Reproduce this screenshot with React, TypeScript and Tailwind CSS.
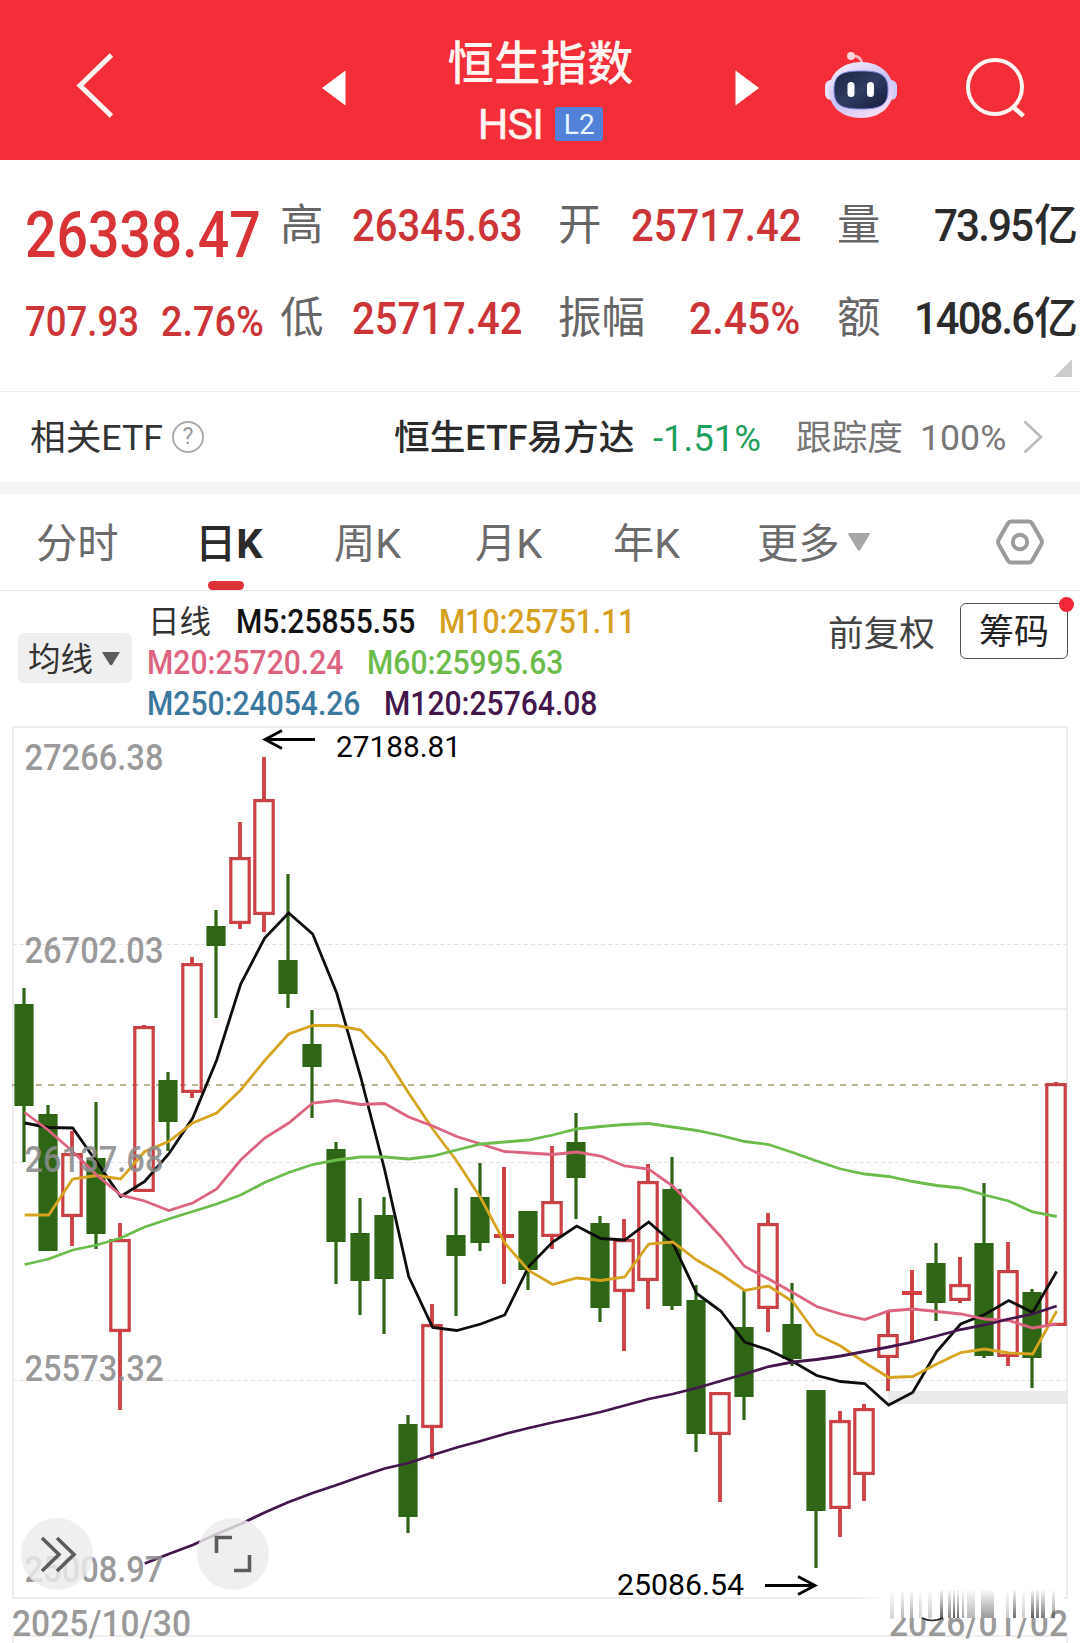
import type { ReactNode } from 'react';
import clsx from 'clsx';

// [direction, high, bodyTop, bodyBottom, low] in chart pixels
type Candle = ['up' | 'down', number, number, number, number];

const candles: Candle[] = [
  ['down', 988, 1004, 1106, 1162],
  ['down', 1105, 1114, 1251, 1251],
  ['up', 1131, 1153, 1217, 1246],
  ['down', 1102, 1158, 1234, 1249],
  ['up', 1223, 1239, 1332, 1410],
  ['up', 1025, 1026, 1192, 1192],
  ['down', 1072, 1080, 1122, 1151],
  ['up', 957, 963, 1093, 1098],
  ['down', 910, 926, 946, 1018],
  ['up', 822, 857, 924, 929],
  ['up', 757, 799, 915, 932],
  ['down', 874, 960, 994, 1008],
  ['down', 1010, 1044, 1067, 1118],
  ['down', 1142, 1149, 1242, 1284],
  ['down', 1198, 1233, 1281, 1315],
  ['down', 1197, 1215, 1279, 1334],
  ['down', 1415, 1424, 1517, 1533],
  ['up', 1304, 1324, 1428, 1459],
  ['down', 1188, 1235, 1256, 1316],
  ['down', 1163, 1197, 1243, 1251],
  ['up', 1167, 1234, 1238, 1284],
  ['down', 1211, 1211, 1270, 1290],
  ['up', 1146, 1201, 1237, 1249],
  ['down', 1113, 1142, 1178, 1219],
  ['down', 1216, 1223, 1308, 1322],
  ['up', 1219, 1239, 1292, 1351],
  ['up', 1164, 1181, 1281, 1309],
  ['down', 1157, 1189, 1306, 1310],
  ['down', 1285, 1300, 1434, 1452],
  ['up', 1392, 1392, 1435, 1502],
  ['down', 1291, 1327, 1397, 1420],
  ['up', 1213, 1223, 1309, 1332],
  ['down', 1283, 1324, 1359, 1366],
  ['down', 1390, 1390, 1511, 1568],
  ['up', 1411, 1420, 1509, 1537],
  ['up', 1404, 1408, 1475, 1501],
  ['up', 1312, 1334, 1358, 1391],
  ['up', 1270, 1291, 1295, 1342],
  ['down', 1243, 1263, 1303, 1321],
  ['up', 1257, 1284, 1301, 1303],
  ['down', 1183, 1243, 1356, 1358],
  ['up', 1242, 1270, 1357, 1366],
  ['down', 1289, 1292, 1358, 1388],
  ['up', 1082, 1083, 1326, 1326],
];

const averages = [
  {
    name: 'M5',
    color: '#0d0d0d',
    start: 0,
    points: [
      1123, 1127.5, 1128, 1162, 1196.5, 1181.5, 1154, 1118, 1060, 984, 938, 913, 934, 993, 1077,
      1170, 1276.5, 1327.5, 1330.5, 1324, 1315, 1266.5, 1242, 1226, 1238.5, 1240, 1222, 1243,
      1293.5, 1311, 1342, 1350, 1361.5, 1375.5, 1381.5, 1383.5, 1405, 1392.5, 1351.5, 1324,
      1314.5, 1300.5, 1312.5, 1271.5,
    ],
  },
  {
    name: 'M10',
    color: '#d6a420',
    start: 0,
    points: [
      1215, 1215, 1179, 1175.5, 1179, 1151.5, 1141.5, 1123, 1113, 1090, 1060.5, 1034, 1025.5,
      1025.5, 1030, 1055.5, 1093, 1129, 1161, 1198, 1243, 1270.5, 1284.5, 1278, 1280.5, 1277, 1244,
      1242, 1260, 1274, 1290.5, 1286, 1301.5, 1334.5, 1346, 1362.5, 1377.5, 1376.5, 1364, 1352.5,
      1349, 1353, 1354, 1311,
    ],
  },
  {
    name: 'M20',
    color: '#dc6480',
    start: 0,
    points: [
      1112.5, 1130.5, 1151.5, 1175, 1195, 1201, 1210.5, 1203, 1189, 1160, 1138, 1123, 1103, 1100.5,
      1104.5, 1103.5, 1117, 1126, 1136.5, 1144, 1151.5, 1153, 1154.5, 1152, 1156, 1166, 1169, 1186,
      1210.5, 1236.5, 1266.5, 1279, 1292.5, 1306.5, 1314, 1319.5, 1311, 1309, 1311.5, 1314, 1319,
      1320.5, 1328, 1324,
    ],
  },
  {
    name: 'M60',
    color: '#6cbc4c',
    start: 0,
    points: [
      1264.5, 1259, 1250, 1245, 1238, 1227, 1219, 1211.5, 1204, 1195, 1182.5, 1172.5, 1164.5, 1160,
      1157, 1157, 1159, 1156, 1150, 1144, 1142, 1140, 1135, 1129, 1126.5, 1124.5, 1123.5, 1127,
      1130.5, 1135.5, 1141.5, 1144.5, 1152.5, 1161, 1169, 1174, 1176.5, 1181.5, 1185.5, 1188, 1195,
      1201, 1212, 1216.5,
    ],
  },
  {
    name: 'M120',
    color: '#43164c',
    start: 5,
    points: [
      1563.5, 1554, 1545, 1534, 1524, 1512.5, 1502, 1493, 1485, 1476.5, 1468.5, 1463, 1455, 1447.5,
      1441, 1434, 1428, 1422.5, 1417.5, 1412, 1405.5, 1399, 1394, 1388, 1381, 1374, 1366.5, 1362,
      1359.5, 1356, 1351.5, 1347, 1342, 1336, 1329.5, 1325, 1319, 1314, 1306,
    ],
  },
];

const priceLabels = [
  { text: '27266.38', y: 769.5 },
  { text: '26702.03', y: 962.5 },
  { text: '26137.68', y: 1171.5 },
  { text: '25573.32', y: 1380.5 },
  { text: '25008.97', y: 1581.5 },
];

// x, width, opacity of the faded strokes above the end date
const streaks = [
  [890, 4, 0.2],
  [901, 3, 0.35],
  [910, 3, 0.4],
  [919, 3, 0.2],
  [928, 4, 0.25],
  [940, 3, 0.75],
  [948, 3, 0.6],
  [953, 2, 0.8],
  [957, 2, 0.7],
  [962, 2, 0.45],
  [967, 8, 0.35],
  [981, 13, 0.5],
  [1006, 3, 0.25],
  [1013, 3, 0.7],
  [1022, 3, 0.25],
  [1031, 3, 0.8],
  [1036, 3, 0.7],
  [1041, 4, 0.65],
  [1052, 3, 0.5],
];

const candleX = (i: number) => 24 + i * 24;

const CandleShape = ({ candle, x }: { candle: Candle; x: number }) => {
  const [kind, high, top, bottom, low] = candle;
  if (kind === 'down') {
    return (
      <g fill="#2f6615">
        <rect x={x - 1.6} y={high} width="3.2" height={low - high} />
        <rect x={x - 9.6} y={top} width="19.2" height={bottom - top} />
      </g>
    );
  }
  return (
    <g fill="#cf3f42">
      <rect x={x - 1.9} y={high} width="3.8" height={top - high} />
      <rect x={x - 1.9} y={bottom} width="3.8" height={low - bottom} />
      {bottom - top < 6 ? (
        <>
          <rect x={x - 10} y={top} width="20" height={bottom - top} />
          <rect x={x - 1.9} y={high} width="3.8" height={low - high} />
        </>
      ) : (
        <rect
          x={x - 9.2}
          y={top + 1.6}
          width="18.4"
          height={bottom - top - 3.2}
          fill="none"
          stroke="#c94145"
          strokeWidth="3.2"
        />
      )}
    </g>
  );
};

const Chart = () => (
  <svg viewBox="0 720 1080 923" className="block w-full h-[923px]">
    <defs>
      <linearGradient id="streak" x1="0" y1="0" x2="0" y2="1">
        <stop offset="0" stopColor="#333" stopOpacity="0.05" />
        <stop offset="1" stopColor="#333" />
      </linearGradient>
      <linearGradient id="haze" x1="0" y1="0" x2="1" y2="0">
        <stop offset="0" stopColor="#fff" stopOpacity="0" />
        <stop offset="0.15" stopColor="#fff" />
        <stop offset="1" stopColor="#fff" />
      </linearGradient>
    </defs>
    <g fill="none" stroke="#e9e9e9" strokeWidth="1.6">
      <rect x="13" y="727" width="1054" height="871" />
      <path d="M13 1643V1636H1067V1643" />
      <path d="M313 1009H1067" />
    </g>
    <path
      d="M13 944.5H1067M13 1162.5H1067M13 1380.5H1067"
      stroke="#e2e2e2"
      strokeDasharray="4 3"
    />
    <path d="M12 1085H1067" stroke="#a89a6c" strokeWidth="1.6" strokeDasharray="6 6" />
    <rect x="888" y="1391" width="180" height="13" fill="#eaeaea" />
    {candles.map((candle, i) => (
      <CandleShape key={i} candle={candle} x={candleX(i)} />
    ))}
    {averages.map(({ name, color, start, points }) => (
      <polyline
        key={name}
        fill="none"
        stroke={color}
        strokeWidth="2.8"
        points={points.map((y, i) => `${candleX(i + start) + 0.7},${y}`).join(' ')}
      />
    ))}
    <g fill="#8c8c8c" fillOpacity="0.88" fontSize="36" fontWeight="500">
      {priceLabels.map(({ text, y }) => (
        <text key={text} x="24.5" y={y} textLength="139" lengthAdjust="spacingAndGlyphs">
          {text}
        </text>
      ))}
      <text x="12" y="1636" textLength="179" lengthAdjust="spacingAndGlyphs">
        2025/10/30
      </text>
      <text x="889" y="1636" textLength="179" lengthAdjust="spacingAndGlyphs">
        2026/01/02
      </text>
    </g>
    <rect x="856" y="1590" width="192" height="28" fill="url(#haze)" />
    <rect x="1048" y="1590" width="16" height="20" fill="#fff" />
    {streaks.map(([x, width, opacity]) => (
      <rect key={x} x={x} y="1590" width={width} height="28" fill="url(#streak)" opacity={opacity} />
    ))}
    <path d="M922 1618Q932 1623 943 1618" fill="none" stroke="#222" strokeWidth="1.4" />
    <g fill="none" stroke="#000" strokeWidth="2.8">
      <path d="M315 739.5H265M282 730.5L265 739.5L282 748.5" />
      <path d="M765 1585.5H815M798 1576.5L815 1585.5L798 1594.5" />
    </g>
    <g fontSize="30">
      <text x="336" y="757" textLength="125" lengthAdjust="spacingAndGlyphs">
        27188.81
      </text>
      <text x="617" y="1595" textLength="127" lengthAdjust="spacingAndGlyphs">
        25086.54
      </text>
    </g>
    <g fill="#ececec" fillOpacity="0.82">
      <circle cx="57" cy="1554" r="36" />
      <circle cx="233" cy="1554" r="36" />
    </g>
    <g fill="none" stroke="#5c5c5c" strokeWidth="3.6">
      <path d="M42 1538L59 1554.5L42 1571M57 1538L74 1554.5L57 1571" />
      <path d="M216.5 1553V1537.5H232M234 1570.5H249.5V1555" />
    </g>
  </svg>
);

const Robot = () => (
  <svg viewBox="0 0 72 68" className="w-[72px] h-[68px]">
    <defs>
      <linearGradient id="shell" x1="0" y1="0" x2="0.6" y2="1">
        <stop offset="0" stopColor="#fdf3fb" />
        <stop offset="0.6" stopColor="#c9c3f7" />
        <stop offset="1" stopColor="#f4dcf6" />
      </linearGradient>
      <linearGradient id="visor" x1="0" y1="0" x2="1" y2="1">
        <stop offset="0" stopColor="#1b2440" />
        <stop offset="0.5" stopColor="#303c62" />
        <stop offset="1" stopColor="#141c3c" />
      </linearGradient>
    </defs>
    <path d="M26 5Q36 4 37 13" fill="none" stroke="#fbb4bd" strokeWidth="2.6" />
    <circle cx="26" cy="5" r="4" fill="#ffd5da" />
    <rect x="0" y="29" width="14" height="20" rx="6" fill="#e9e2fb" />
    <rect x="58" y="29" width="14" height="20" rx="6" fill="#cfcaf8" />
    <path
      d="M36 11C54 11 68 22 68 39C68 56 55 67 36 67C17 67 4 56 4 39C4 22 18 11 36 11Z"
      fill="url(#shell)"
    />
    <path
      d="M36 20C56 20 63 24 63 39C63 54 56 58 36 58C16 58 9 54 9 39C9 24 16 20 36 20Z"
      fill="url(#visor)"
      stroke="#7d83dd"
      strokeWidth="1"
    />
    <rect x="22.5" y="31" width="7" height="15" rx="3.5" fill="#fff" />
    <rect x="42" y="31" width="7" height="15" rx="3.5" fill="#fff" />
  </svg>
);

const Header = () => (
  <header className="flex h-40 bg-[#f32e39] text-[#fff4f2]">
    <div className="w-[322px] pl-[74px] pt-[51px]">
      <svg viewBox="0 0 42 68" className="w-[42px] h-[68px]" fill="none" stroke="currentColor">
        <path d="M37.5 4L6 34.5L37.5 65" strokeWidth="5" />
      </svg>
    </div>
    <svg viewBox="0 0 24 36" className="mt-[70px] w-6 h-9" fill="#fff">
      <path d="M23.5 0.5V35.5L0 18Z" />
    </svg>
    <div className="flex flex-col items-center w-[389px] pt-[35px]">
      <h1 className="h-[56px] text-[46.5px] leading-[58px] font-medium">恒生指数</h1>
      <div className="flex items-center h-[66px]">
        <span className="pt-px text-[43px] tracking-[-0.8px] [-webkit-text-stroke:0.5px]">HSI</span>
        <span className="ml-3 w-12 h-[34px] rounded-[3px] bg-[#5182d8] text-center text-[28px] leading-[35px] text-[#e9f6ff]">
          L2
        </span>
      </div>
    </div>
    <svg viewBox="0 0 24 36" className="mt-[70px] w-6 h-9" fill="#fff">
      <path d="M0.5 0.5V35.5L24 18Z" />
    </svg>
    <div className="ml-[66px] mt-[51px]">
      <Robot />
    </div>
    <svg
      viewBox="0 0 64 64"
      className="ml-[66px] mt-[56px] w-16 h-16"
      fill="none"
      stroke="currentColor"
    >
      <circle cx="32" cy="31" r="27" strokeWidth="4" />
      <path d="M49 50L60.5 60" strokeWidth="4.5" />
    </svg>
  </header>
);

const Num = ({ className, children }: { className: string; children: ReactNode }) => (
  <span className={clsx('block whitespace-nowrap origin-left font-medium', className)}>
    {children}
  </span>
);

const Label = ({ className, children }: { className: string; children: ReactNode }) => (
  <span className={clsx('shrink-0 text-[43.5px] text-[#666]', className)}>{children}</span>
);

const Quote = () => (
  <section className="relative h-[232px] pt-[26px] border-b border-[#ececec] text-[#cc3538]">
    <div className="flex items-center h-20">
      <div className="w-[280px] shrink-0 pl-[25px] pt-[19px]">
        <Num className="w-[255px] text-[64px] leading-[76px] scale-x-[0.865] text-[#d83438]">
          26338.47
        </Num>
      </div>
      <Label className="w-[72px]">高</Label>
      <div className="w-[206px] shrink-0">
        <Num className="text-[44px] scale-x-[0.91]">26345.63</Num>
      </div>
      <Label className="w-[73px]">开</Label>
      <div className="w-[206px] shrink-0">
        <Num className="text-[44px] scale-x-[0.91]">25717.42</Num>
      </div>
      <Label className="w-[97px]">量</Label>
      <div className="flex shrink-0 text-[#2b2b2b]">
        <div className="w-[100px]">
          <Num className="w-[100px] text-[44px] tracking-[-2px] scale-x-[0.96]">73.95</Num>
        </div>
        <span className="text-[44px] font-medium">亿</span>
      </div>
    </div>
    <div className="flex items-center h-20 mt-[13px]">
      <div className="w-[137px] shrink-0 pl-[25px] pt-[5px]">
        <Num className="text-[42px] scale-x-[0.87]">707.93</Num>
      </div>
      <div className="w-[143px] shrink-0 pl-[24px] pt-[5px]">
        <Num className="text-[42px] scale-x-[0.9]">2.76%</Num>
      </div>
      <Label className="w-[72px]">低</Label>
      <div className="w-[206px] shrink-0">
        <Num className="text-[44px] scale-x-[0.91]">25717.42</Num>
      </div>
      <Label className="w-[131px]">振幅</Label>
      <div className="w-[148px] shrink-0">
        <Num className="text-[44px] scale-x-[0.93]">2.45%</Num>
      </div>
      <Label className="w-[77px]">额</Label>
      <div className="flex shrink-0 text-[#2b2b2b]">
        <div className="w-[120px]">
          <Num className="w-[120px] text-[44px] tracking-[-2px] scale-x-[0.95]">1408.6</Num>
        </div>
        <span className="text-[44px] font-medium">亿</span>
      </div>
    </div>
    <svg viewBox="0 0 18 18" className="absolute right-2 bottom-[14px] w-[18px] h-[18px]" fill="#ccc">
      <path d="M18 0V18H0Z" />
    </svg>
  </section>
);

const RelatedEtf = () => (
  <section className="flex items-center h-[102px] pl-[30px] text-[35.7px] border-b-12 border-[#f5f5f5] whitespace-nowrap">
    <span className="w-[142px] pt-1 text-[#333]">相关ETF</span>
    <span className="flex items-center justify-center w-8 h-8 rounded-full border-2 border-[#aaa] text-[23px] text-[#999]">
      ?
    </span>
    <span className="ml-[190px] w-[259px] pt-1 font-medium text-[#2b2b2b]">恒生ETF易方达</span>
    <span className="w-[143px] pt-1 text-[36.5px] text-[#1fa05c]">-1.51%</span>
    <span className="w-[124px] pt-1 text-[#777]">跟踪度</span>
    <span className="w-[103px] pt-1 text-[#777]">100%</span>
    <svg viewBox="0 0 20 34" className="w-5 h-[34px]" fill="none" stroke="#bbb" strokeWidth="2.6">
      <path d="M1.5 1.5L18 17L1.5 32.5" />
    </svg>
  </section>
);

const Tabs = () => (
  <nav className="flex h-[97px] pl-[36px] border-b border-[#e6e6e6] text-[41.3px] leading-[100px] text-[#6c6c6c]">
    <span className="w-[159px]">分时</span>
    <span className="relative w-[139px] font-medium text-[#2b2b2b]">
      日<b className="font-bold">K</b>
      <i className="absolute left-[13px] bottom-0 w-9 h-[9px] rounded-full bg-[#dc3238]" />
    </span>
    <span className="w-[141px]">周K</span>
    <span className="w-[138px]">月K</span>
    <span className="w-[144px]">年K</span>
    <span className="w-[91px]">更多</span>
    <svg viewBox="0 0 22 18" className="mt-[39px] w-[22px] h-[18px]" fill="#a6a6a6">
      <path d="M1 0H21L22 1L12 17.5H10L0 1Z" />
    </svg>
    <svg
      viewBox="0 0 50 48"
      className="ml-[125px] mt-[24px] w-[50px] h-12"
      fill="none"
      stroke="#9c9c9c"
      strokeWidth="4"
    >
      <path d="M16 3.5H34Q36 3.5 37 5.3L46.5 22Q47.5 24 46.5 26L37 42.7Q36 44.5 34 44.5H16Q14 44.5 13 42.7L3.5 26Q2.5 24 3.5 22L13 5.3Q14 3.5 16 3.5Z" />
      <circle cx="25" cy="24" r="7.2" />
    </svg>
  </nav>
);

const Legend = () => (
  <section className="flex h-[129px] font-medium text-[32.5px] leading-[41px] whitespace-nowrap">
    <div className="flex items-center mt-[42px] ml-[18px] w-[114px] h-[50px] pl-[10px] rounded-md bg-[#efefef] text-[32.5px] font-normal text-[#333]">
      <span className="pt-1">均线</span>
      <svg viewBox="0 0 18 13" className="ml-[9px] w-[18px] h-[13px]" fill="#5c5c5c">
        <path d="M0 0H18L10 13H8Z" />
      </svg>
    </div>
    <div className="ml-[15px] w-[681px] pt-[11px]">
      <div className="flex h-[41px]">
        <span className="w-[89px] pl-px text-[31.5px] font-normal text-[#333]">日线</span>
        <Num className="w-[203px] scale-x-[0.925] text-[#111]">M5:25855.55</Num>
        <Num className="scale-x-[0.925] text-[#d6a020]">M10:25751.11</Num>
      </div>
      <div className="flex h-[41px]">
        <Num className="w-[220px] scale-x-[0.925] text-[#dc6480]">M20:25720.24</Num>
        <Num className="scale-x-[0.925] text-[#6cbc4c]">M60:25995.63</Num>
      </div>
      <div className="flex h-[41px]">
        <Num className="w-[237px] scale-x-[0.925] text-[#3a789e]">M250:24054.26</Num>
        <Num className="scale-x-[0.925] text-[#43164c]">M120:25764.08</Num>
      </div>
    </div>
    <span className="mt-[23px] w-[132px] text-[35.7px] font-normal text-[#444]">前复权</span>
    <div className="relative mt-3 w-[108px] h-[56px] rounded-md border-[1.5px] border-[#555] text-center text-[35px] leading-[58px] font-normal text-[#222]">
      筹码
      <i className="absolute -top-[7px] -right-[7px] w-[15px] h-[15px] rounded-full bg-[#f3263a]" />
    </div>
  </section>
);

const App = () => (
  <main className="w-[1080px] h-[1643px] overflow-hidden bg-white font-[family-name:Roboto,'Noto_Sans_CJK_SC',sans-serif]">
    <Header />
    <Quote />
    <RelatedEtf />
    <Tabs />
    <Legend />
    <Chart />
  </main>
);

export default App;
